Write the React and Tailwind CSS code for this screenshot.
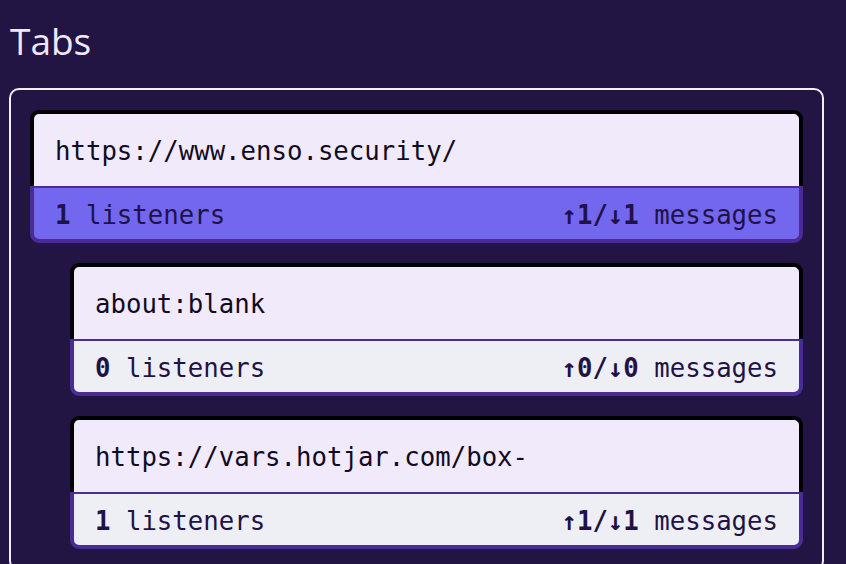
import React from "react";

const mono = { fontFamily: '"DejaVu Sans Mono", "Liberation Mono", monospace' };

function Card({ url, listeners, up, down, active, indent }) {
  return (
    <div className={indent ? "ml-[40px]" : ""}>
      <div
        className="bg-[#f0eafa] border-t-4 border-x-4 border-black rounded-t-[9px] h-[76px] flex items-center px-[21px] pt-[2px] text-[25.7px] text-[#120a24]"
        style={mono}
      >
        {url}
      </div>
      <div
        className={
          (active ? "bg-[#7367f0] " : "bg-[#eeeef5] ") +
          "border-t-2 border-x-4 border-b-4 border-[#4a2c96] rounded-b-[9px] h-[57px] flex items-center justify-between px-[21px] pt-[4px] text-[25.7px] text-[#1f1244]"
        }
        style={mono}
      >
        <span>
          <span className="font-bold">{listeners}</span> listeners
        </span>
        <span>
          <span className="font-bold">
            ↑{up}/↓{down}
          </span>{" "}
          messages
        </span>
      </div>
    </div>
  );
}

export default function App() {
  return (
    <div className="min-h-screen bg-[#221443] overflow-hidden">
      <div
        className="pt-[22px] pl-[10px] text-[37px] leading-[37px] text-[#f0e8fa]"
        style={{ fontFamily: '"Open Sans", "Noto Sans", sans-serif' }}
      >
        Tabs
      </div>
      <div className="mt-[29px] ml-[9px] w-[815px] border-2 border-[#f3eefa] rounded-[10px] px-[19px] pt-[20px] pb-[20px] flex flex-col gap-[20px]">
        <Card url="https://www.enso.security/" listeners={1} up={1} down={1} active />
        <Card url="about:blank" listeners={0} up={0} down={0} indent />
        <Card url="https://vars.hotjar.com/box-" listeners={1} up={1} down={1} indent />
      </div>
    </div>
  );
}
